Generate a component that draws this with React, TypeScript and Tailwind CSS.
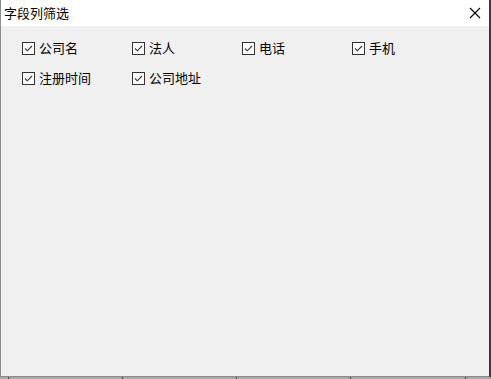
const fields = [
  ["公司名", "法人", "电话", "手机"],
  ["注册时间", "公司地址"],
];

function Check({ label }: { label: string }) {
  return (
    <div className="flex w-[110px] items-center gap-[4px]">
      <span className="flex h-[13px] w-[13px] items-center justify-center border border-[#333333] bg-white">
        <svg width="11" height="11" viewBox="0 0 11 11">
          <path d="M2 5.5 L4.3 7.8 L9 3" fill="none" stroke="#333333" strokeWidth="1.1" />
        </svg>
      </span>
      <span className="text-[13px] leading-[16px] text-black">{label}</span>
    </div>
  );
}

export default function App() {
  return (
    <div
      className="flex h-[379px] w-[491px] flex-col bg-[#b4b4b4]"
      style={{ fontFamily: '"Microsoft YaHei", "Noto Sans CJK SC", sans-serif' }}
    >
      <div className="flex h-[377px]">
        <div className="flex w-[489px] flex-col border-b border-l border-[#8c8c8c] bg-[#f0f0f0]">
          <div className="flex h-[26px] items-center justify-between bg-white pl-[3px] pr-[8px]">
            <span className="text-[13px] leading-[16px] text-black">字段列筛选</span>
            <svg width="12" height="12" viewBox="0 0 12 12">
              <path d="M1 1 L11 11 M11 1 L1 11" stroke="#000" strokeWidth="1.1" />
            </svg>
          </div>
          <div className="flex flex-col gap-[14px] pl-[21px] pt-[14px]">
            {fields.map((row, i) => (
              <div key={i} className="flex">
                {row.map((f) => (
                  <Check key={f} label={f} />
                ))}
              </div>
            ))}
          </div>
        </div>
        <div className="w-[2px] bg-[#3a3a3a]" />
      </div>
      <div className="flex h-[2px] bg-[#a8a8a8]">
        <div className="w-[8px]" />
        <div className="w-[114px] border-l border-[#404040]" />
        <div className="w-[114px] border-l border-[#404040]" />
        <div className="w-[114px] border-l border-[#404040]" />
        <div className="w-[115px] border-l border-[#404040]" />
        <div className="flex-1 border-l border-[#404040]" />
      </div>
    </div>
  );
}
